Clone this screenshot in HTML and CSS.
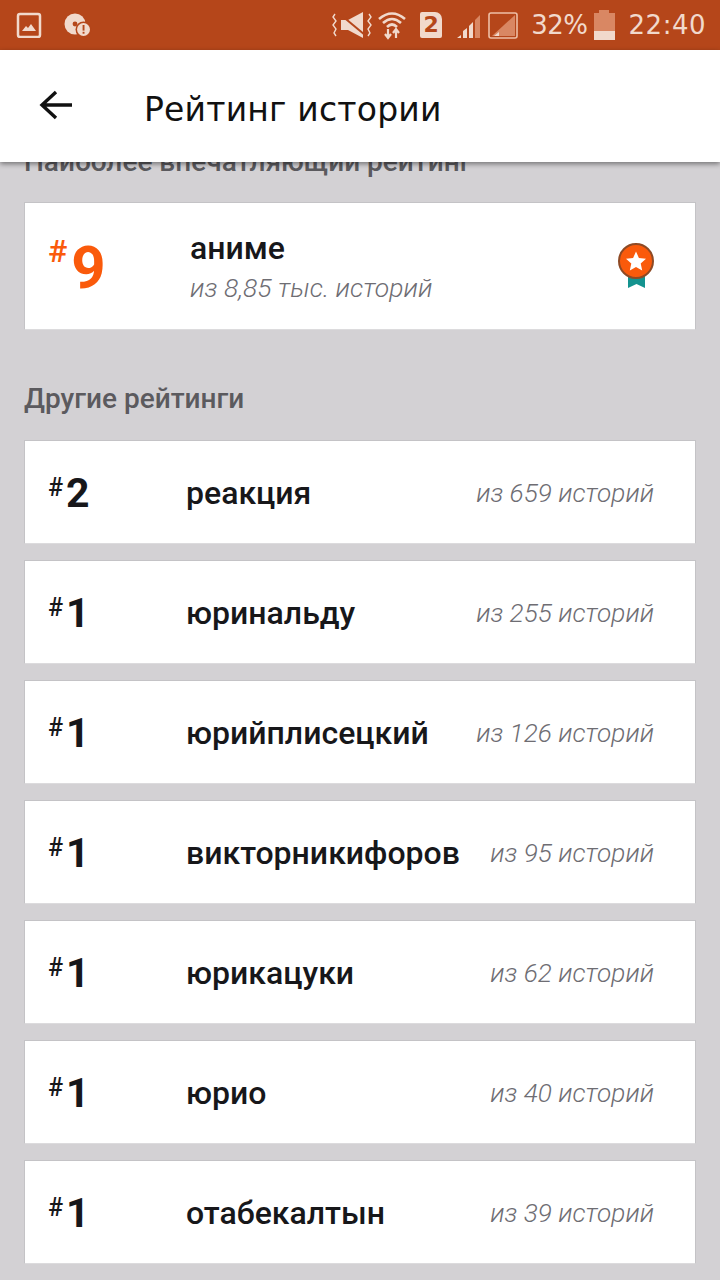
FILE: index.html
```html
<!DOCTYPE html>
<html lang="ru">
<head>
<meta charset="utf-8">
<title>Рейтинг истории</title>
<link rel="stylesheet" href="styles.css">
</head>
<body>
<div class="status">
  <div class="status-left">
    <svg class="ic-pic" width="26" height="26" viewBox="0 0 26 26"><rect x="2" y="2" width="22" height="23" rx="2" fill="none" stroke="#f1d9cc" stroke-width="2.5"/><path d="M6 19 L10 14 L12 16 L15 12 L20 19 Z" fill="#f1d9cc"/></svg>
    <svg class="ic-disc" width="28" height="26" viewBox="0 0 28 26"><circle cx="11" cy="12" r="10.5" fill="#f1d9cc"/><circle cx="11" cy="12" r="2.4" fill="#b5461a"/><circle cx="19.5" cy="17.5" r="8" fill="#b5461a"/><circle cx="19.5" cy="17.5" r="6.5" fill="#f1d9cc"/><rect x="18.6" y="13" width="1.9" height="5.6" fill="#b5461a"/><rect x="18.6" y="19.8" width="1.9" height="1.9" fill="#b5461a"/></svg>
  </div>
  <div class="status-right">
    <svg class="s-speaker" width="40" height="28" viewBox="0 0 40 28"><path d="M3 3 l-2 3 l3 4 l-3 4 l3 4 l-2 4 l2 3" fill="none" stroke="#f1d9cc" stroke-width="1.4"/><path d="M37 3 l2 3 l-3 4 l3 4 l-3 4 l2 4 l-2 3" fill="none" stroke="#f1d9cc" stroke-width="1.4"/><path d="M9 9 h7 L31 1 V27 L16 19 h-7 Z" fill="#f1d9cc"/><path d="M9 4 L33 24" stroke="#b5461a" stroke-width="2"/></svg>
    <svg class="s-wifi" width="28" height="30" viewBox="0 0 28 30"><path d="M1 9 Q14 -2 27 9" fill="none" stroke="#f1d9cc" stroke-width="2.6"/><path d="M5 13 Q14 5 23 13" fill="none" stroke="#f1d9cc" stroke-width="2.6"/><path d="M9 17 Q14 12 19 17" fill="none" stroke="#f1d9cc" stroke-width="2.6"/><path d="M10 19 v8 m-3 -3 l3 4 l3 -4 M18 28 v-9 m-3 4 l3 -4 l3 4" fill="none" stroke="#f1d9cc" stroke-width="2.2"/></svg>
    <div class="sim">2</div>
    <svg class="s-signal" width="26" height="28" viewBox="0 0 26 28"><path d="M1 27 l4 -3 v3 Z M7 27 v-7 l4 -3 v10 Z M13 27 v-12 l4 -4 v16 Z" fill="#f1d9cc"/><path d="M19 27 v-18 l5 -5 v23 Z" fill="#d98763"/></svg>
    <svg class="s-box" width="30" height="28" viewBox="0 0 30 28"><rect x="1" y="2" width="28" height="25" rx="2" fill="none" stroke="#eebfa6" stroke-width="1.6"/><path d="M4 25 L27 4 V25 Z" fill="#d98763"/><path d="M6 25 l5 -4 v4 Z" fill="#f1d9cc"/></svg>
    <span class="st-text pct">32%</span>
    <div class="battery"><div class="battery-cap"></div><div class="battery-body"><div class="battery-fill"></div></div></div>
    <span class="st-text clock">22:40</span>
  </div>
</div>
<header class="appbar">
  <svg class="back" width="34" height="32" viewBox="0 0 34 32"><path d="M17 3 L3 16 L17 29 M3 16 H33" fill="none" stroke="#111" stroke-width="3.4"/></svg>
  <h1 class="title">Рейтинг истории</h1>
</header>
<main class="content">
  <h2 class="sec sec-top">Наиболее впечатляющий рейтинг</h2>
  <section class="card card-top">
    <div class="rank rank-top"><span class="hash">#</span><span class="num">9</span></div>
    <div class="top-text">
      <div class="name">аниме</div>
      <div class="of">из 8,85 тыс. историй</div>
    </div>
    <svg class="medal" width="36" height="46" viewBox="0 0 36 46"><path d="M10 28 H27 V45 L18.500 41 L10 45 Z" fill="#14938f"/><circle cx="18" cy="18" r="17" fill="#fa5a0b" stroke="#8e4a25" stroke-width="2"/><path d="M18 8.5 L20.9 15 L28 15.8 L22.700 20.500 L24.200 27.500 L18 24 L11.800 27.500 L13.300 20.500 L8 15.800 L15.100 15 Z" fill="#fff"/></svg>
  </section>
  <h2 class="sec sec-other">Другие рейтинги</h2>
  <div class="list">
    <section class="card row"><div class="rank"><span class="hash">#</span><span class="num">2</span></div><div class="name">реакция</div><div class="of">из 659 историй</div></section>
    <section class="card row"><div class="rank"><span class="hash">#</span><span class="num">1</span></div><div class="name">юринальду</div><div class="of">из 255 историй</div></section>
    <section class="card row"><div class="rank"><span class="hash">#</span><span class="num">1</span></div><div class="name">юрийплисецкий</div><div class="of">из 126 историй</div></section>
    <section class="card row"><div class="rank"><span class="hash">#</span><span class="num">1</span></div><div class="name">викторникифоров</div><div class="of">из 95 историй</div></section>
    <section class="card row"><div class="rank"><span class="hash">#</span><span class="num">1</span></div><div class="name">юрикацуки</div><div class="of">из 62 историй</div></section>
    <section class="card row"><div class="rank"><span class="hash">#</span><span class="num">1</span></div><div class="name">юрио</div><div class="of">из 40 историй</div></section>
    <section class="card row"><div class="rank"><span class="hash">#</span><span class="num">1</span></div><div class="name">отабекалтын</div><div class="of">из 39 историй</div></section>
  </div>
</main>
</body>
</html>
```
FILE: styles.css
```css
* { box-sizing: border-box; }
html, body { margin: 0; height: 1280px; overflow: hidden; }
body { background: #d3d1d4; font-family: Roboto, "Noto Sans", sans-serif; display: flex; flex-direction: column; }
.status { height: 50px; flex: none; background: #b5461a; display: flex; justify-content: space-between; align-items: center; padding: 0 14px 0 16px; }
.status-left { display: flex; align-items: center; gap: 22px; }
.status-right { display: flex; align-items: center; }
.s-wifi { margin-left: 6px; }
.sim { margin-left: 14px; width: 22px; height: 26px; background: #f1d9cc; color: #b5461a; border-radius: 2px 7px 2px 2px; font: 700 22px/26px "DejaVu Sans", sans-serif; text-align: center; }
.s-signal { margin-left: 14px; }
.s-box { margin-left: 6px; }
.st-text { color: #f1d9cc; font: 400 26px/30px "DejaVu Sans", sans-serif; letter-spacing: -0.5px; }
.pct { margin-left: 13px; }
.clock { margin-left: 14px; letter-spacing: 0.5px; }
.battery { margin-left: 6px; width: 21px; height: 30px; display: flex; flex-direction: column; align-items: center; }
.battery-cap { flex: none; width: 10px; height: 3px; background: #d98763; }
.battery-body { flex: 1; width: 100%; background: #d98763; display: flex; align-items: flex-end; }
.battery-fill { width: 100%; height: 9px; background: #f1d9cc; }
.appbar { position: relative; z-index: 2; flex: none; height: 112px; background: #fff; display: flex; align-items: center; padding-left: 39px; box-shadow: 0 2px 5px rgba(0,0,0,.45); }
.back { flex: none; margin-top: -2px; }
.title { margin: 7px 0 0 71px; font: 400 33px/40px "DejaVu Sans", sans-serif; color: #111; letter-spacing: 0.2px; }
.content { padding: 0 24px; }
.sec { margin: 0; font-size: 28px; font-weight: 500; line-height: 32px; color: #5b5a5e; }
.sec-top { margin-top: -16px; margin-bottom: 24px; }
.sec-other { margin-top: 53px; margin-bottom: 25px; }
.card { background: #fff; border: 1px solid #c4c3c6; border-bottom-color: #dcdbdd; display: flex; align-items: center; }
.card-top { height: 128px; }
.rank { display: flex; align-items: flex-start; color: #17171a; }
.hash { font-size: 25px; line-height: 25px; font-weight: 500; margin-right: 3px; margin-top: 2px; }
.num { font-size: 41px; line-height: 41px; font-weight: 700; }
.rank-top { width: 165px; padding-left: 23px; color: #fa5a0b; margin-top: 3px; }
.rank-top .hash { font-size: 32px; line-height: 32px; margin-right: 4px; margin-top: -3px; }
.rank-top .num { font-size: 60px; line-height: 60px; }
.top-text { flex: 1; padding-top: 2px; }
.name { font-size: 32px; line-height: 38px; font-weight: 500; color: #17171a; }
.top-text .of { font-size: 26.5px; margin-top: 3px; }
.of { font-size: 26.2px; line-height: 36px; font-weight: 300; font-style: italic; color: #6e6d73; }
.medal { flex: none; margin-right: 41px; margin-top: 0; }
.list { display: flex; flex-direction: column; gap: 16px; }
.row { height: 104px; }
.row .rank { width: 161px; padding-left: 23px; margin-top: 2px; }
.row .name { flex: 1; margin-top: 1px; }
.row .of { margin-right: 41px; margin-top: 1px; }
```
